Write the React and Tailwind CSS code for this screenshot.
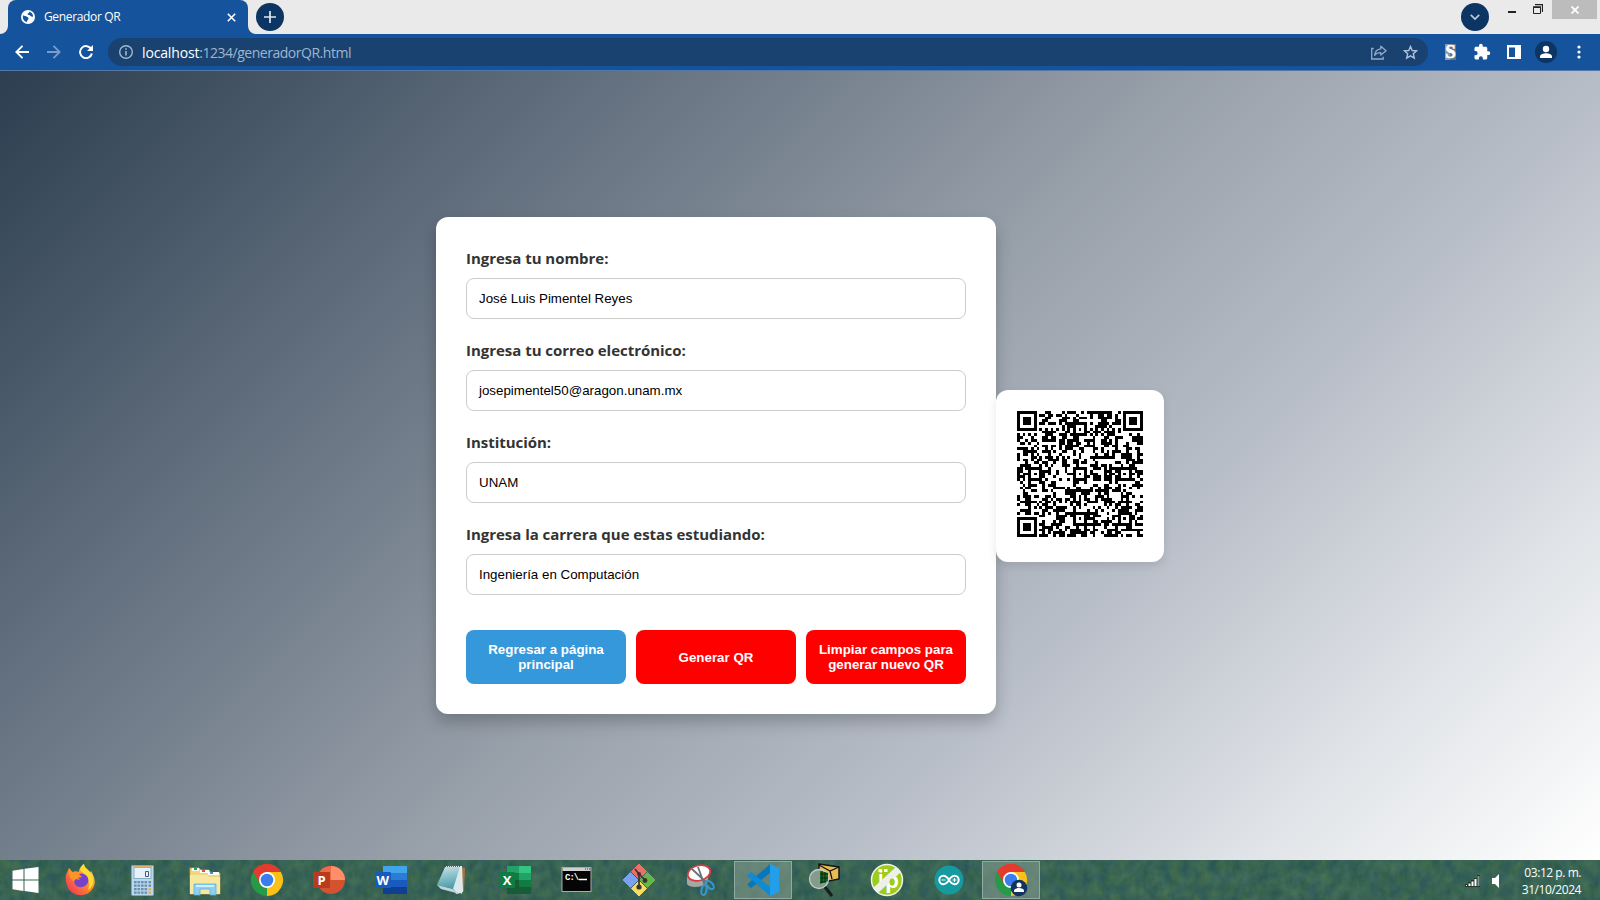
import React from "react";

/* ---------- QR encoder: version 7, level M, byte mode ---------- */
const SIZE = 45;

function encodeQr(text) {
  const exp = [];
  const log = [];
  for (let i = 0, x = 1; i < 255; i++) {
    exp[i] = x;
    log[x] = i;
    x <<= 1;
    if (x & 256) x ^= 0x11d;
  }
  const mul = (a, b) => (a && b ? exp[(log[a] + log[b]) % 255] : 0);

  const bytes = Array.from(new TextEncoder().encode(text)).slice(0, 122);
  const bits = [];
  const put = (v, n) => {
    for (let i = n - 1; i >= 0; i--) bits.push((v >> i) & 1);
  };
  put(4, 4);
  put(bytes.length, 8);
  bytes.forEach((b) => put(b, 8));
  put(0, 4);
  while (bits.length % 8) bits.push(0);
  const data = [];
  for (let i = 0; i < bits.length; i += 8) data.push(parseInt(bits.slice(i, i + 8).join(""), 2));
  for (let p = 0xec; data.length < 124; p ^= 0xfd) data.push(p);

  const gen = Array(18).fill(0);
  gen[17] = 1;
  for (let i = 0, root = 1; i < 18; i++) {
    for (let j = 0; j < 18; j++) {
      gen[j] = mul(gen[j], root);
      if (j < 17) gen[j] ^= gen[j + 1];
    }
    root = mul(root, 2);
  }
  const blocks = [0, 1, 2, 3].map((k) => data.slice(k * 31, k * 31 + 31));
  const ecc = blocks.map((block) => {
    const r = Array(18).fill(0);
    block.forEach((b) => {
      const f = b ^ r.shift();
      r.push(0);
      gen.forEach((g, i) => (r[i] ^= mul(g, f)));
    });
    return r;
  });
  const words = [];
  for (let i = 0; i < 31; i++) blocks.forEach((b) => words.push(b[i]));
  for (let i = 0; i < 18; i++) ecc.forEach((b) => words.push(b[i]));

  const m = Array.from({ length: SIZE }, () => Array(SIZE).fill(null));
  for (let i = 0; i < SIZE; i++) {
    m[6][i] = i % 2 === 0;
    m[i][6] = i % 2 === 0;
  }
  [[3, 3], [41, 3], [3, 41]].forEach(([cx, cy]) => {
    for (let dy = -4; dy <= 4; dy++)
      for (let dx = -4; dx <= 4; dx++) {
        const d = Math.max(Math.abs(dx), Math.abs(dy));
        if (m[cy + dy] && m[cy + dy][cx + dx] !== undefined) m[cy + dy][cx + dx] = d !== 2 && d !== 4;
      }
  });
  [[6, 22], [22, 6], [22, 22], [22, 38], [38, 22], [38, 38]].forEach(([cx, cy]) => {
    for (let dy = -2; dy <= 2; dy++)
      for (let dx = -2; dx <= 2; dx++) m[cy + dy][cx + dx] = Math.max(Math.abs(dx), Math.abs(dy)) !== 1;
  });
  for (let i = 0; i < 18; i++) {
    const v = ((0x07c94 >> i) & 1) === 1;
    m[Math.floor(i / 3)][34 + (i % 3)] = v;
    m[34 + (i % 3)][Math.floor(i / 3)] = v;
  }
  const fmt = 0x5412;
  const f = (i) => ((fmt >> i) & 1) === 1;
  for (let i = 0; i < 6; i++) m[i][8] = f(i);
  m[7][8] = f(6);
  m[8][8] = f(7);
  m[8][7] = f(8);
  for (let i = 9; i < 15; i++) m[8][14 - i] = f(i);
  for (let i = 0; i < 8; i++) m[8][SIZE - 1 - i] = f(i);
  for (let i = 8; i < 15; i++) m[SIZE - 15 + i][8] = f(i);
  m[SIZE - 8][8] = true;

  let k = 0;
  for (let right = SIZE - 1; right >= 1; right -= 2) {
    if (right === 6) right = 5;
    for (let v = 0; v < SIZE; v++)
      for (let j = 0; j < 2; j++) {
        const x = right - j;
        const y = ((right + 1) & 2) === 0 ? SIZE - 1 - v : v;
        if (m[y][x] === null) {
          const bit = k < words.length * 8 ? (words[k >> 3] >> (7 - (k & 7))) & 1 : 0;
          k++;
          m[y][x] = (bit ^ ((x + y) % 2 === 0 ? 1 : 0)) === 1;
        }
      }
  }
  return m;
}

function QrCode({ text }) {
  const d = encodeQr(text)
    .map((row, y) => row.map((on, x) => (on ? `M${x} ${y}h1v1h-1z` : "")).join(""))
    .join("");
  return (
    <svg className="block size-[126px]" viewBox="0 0 45 45" shapeRendering="crispEdges">
      <path d={d} fill="#000" />
    </svg>
  );
}

/* ---------- Browser chrome ---------- */
function TabStrip() {
  return (
    <div className="flex h-[34px] bg-[#eaeaea]">
      <div className="flex w-2 items-end bg-[#15539c]">
        <div className="h-full w-2 rounded-br-lg bg-[#eaeaea]" />
      </div>
      <div className="flex w-60 bg-[#eaeaea]">
        <div className="flex w-full items-center rounded-t-lg bg-[#15539c] pl-[13px] pr-[11px]">
          <svg className="size-[14px]" viewBox="0 0 14 14">
            <circle cx="7" cy="7" r="7" fill="#fff" />
            <path d="M2 5.2c1.500 1 2.800.4 3.600 1.400.8 1 2 .6 1.900 1.900-.1 1-1.200 1.100-1.500 3.400C3 11.600 1.300 8.600 2 5.200zM8.600 1.800c-.2 1.600-1.800 1.100-2 2.300.2 1.300 2.100.7 2.900 1.700.8 1.100 1.700 1.200 2.600.8-.1-2.500-1.500-4.200-3.500-4.800z" fill="#15539c" />
          </svg>
          <span className="ml-[9px] flex-1 whitespace-nowrap font-['Open_Sans','Noto_Sans',sans-serif] text-[12px] tracking-[-0.35px] text-white">Generador QR</span>
          <svg className="mr-px size-[9px]" viewBox="0 0 9 9" stroke="#fff" strokeWidth="1.6">
            <path d="M.8.8l7.400 7.400M8.200.8L.8 8.200" />
          </svg>
        </div>
      </div>
      <div className="w-2 bg-[#15539c]">
        <div className="h-full w-2 rounded-bl-lg bg-[#eaeaea]" />
      </div>
      <div className="mt-[3px] flex size-7 items-center justify-center rounded-full bg-[#0d3563]">
        <svg className="size-3" viewBox="0 0 12 12" stroke="#dfe8f3" strokeWidth="1.700">
          <path d="M6 0v12M0 6h12" />
        </svg>
      </div>
      <div className="flex-1" />
      <div className="mt-[3px] flex size-7 items-center justify-center rounded-full bg-[#0d3563]">
        <svg className="size-[10px]" viewBox="0 0 10 10" fill="none" stroke="#b9cbe2" strokeWidth="1.700">
          <path d="M.8 2.800L5 7l4.200-4.200" />
        </svg>
      </div>
      <svg className="ml-[19px] mt-[11px] h-[2px] w-2" viewBox="0 0 8 2"><path d="M0 0h8v2H0z" fill="#222" /></svg>
      <svg className="ml-[17px] mt-1 size-[10px]" viewBox="0 0 10 10" fill="none" stroke="#222">
        <path d="M.5 3.500h7v6h-7z" /><path d="M0 3h8M2 .5h7.500V8" strokeWidth="1.300" />
      </svg>
      <div className="ml-[9px] mr-[3px] flex h-[19px] w-[45px] items-center justify-center bg-[#bcbcbc]">
        <svg className="size-2" viewBox="0 0 8 8" stroke="#fff" strokeWidth="1.700"><path d="M.5.5l7 7M7.500.5l-7 7" /></svg>
      </div>
    </div>
  );
}

function Toolbar() {
  return (
    <div className="flex h-[37px] items-center border-b border-[#5279a4] bg-[#15539c]">
      <svg className="ml-[15px] size-[14px]" viewBox="0 0 14 14" fill="none" stroke="#fff" strokeWidth="1.900"><path d="M14 7H1.500M7.500.8L1.300 7l6.200 6.200" /></svg>
      <svg className="ml-[18px] size-[14px]" viewBox="0 0 14 14" fill="none" stroke="#799dc8" strokeWidth="1.800"><path d="M0 7h12.500M6.500.8L12.700 7l-6.200 6.200" /></svg>
      <svg className="ml-[18px] size-[14px]" viewBox="0 0 14 14" fill="none"><path d="M12.300 4.200A6 6 0 1 0 12.900 8.500" stroke="#fff" strokeWidth="2" /><path d="M14 0v6H8z" fill="#fff" /></svg>
      <div className="ml-[15px] flex h-7 w-[1320px] items-center rounded-full bg-[#194271] pl-[11px] pr-[10px]">
        <svg className="size-[14px]" viewBox="0 0 14 14" fill="none" stroke="#a3b7cf" strokeWidth="1.400"><circle cx="7" cy="7" r="6.300" /><path d="M7 6v4.500M7 3.300v1.500" strokeWidth="1.600" /></svg>
        <span className="ml-[9px] flex-1 pt-px font-['Open_Sans','Noto_Sans',sans-serif] text-[14px] leading-5 tracking-[-0.48px] text-[#9fb5cf]">
          <span className="tracking-[-0.15px] text-white">localhost</span>:1234/generadorQR.html
        </span>
        <svg className="h-[15px] w-4" viewBox="0 0 16 15" fill="none" stroke="#93abc8" strokeWidth="1.300"><path d="M2.700 3.500H.7v10.500h11.500v-2.300" /><path d="M9.800 1.200l5.300 4.500-5.300 4.400V7.600C7 7.500 5 8.400 3.600 10.300 4 6.800 6 4.300 9.800 3.900z" strokeLinejoin="round" /></svg>
        <svg className="ml-4 size-[15px]" viewBox="0 0 15 15" fill="none" stroke="#b0c3da" strokeWidth="1.400"><path d="M7.500 1.500l1.700 4 4.400.4-3.300 2.900 1 4.300-3.800-2.300-3.800 2.300 1-4.300L1.400 5.900l4.400-.4z" /></svg>
      </div>
      <div className="ml-[17px] flex h-[16px] w-[11px] items-center justify-center bg-[linear-gradient(90deg,#8b98a5_50%,#657487_50%)]">
        <span className="font-['Liberation_Serif',serif] text-[19px] font-bold leading-[16px] text-white [-webkit-text-stroke:0.6px_#fff]">S</span>
      </div>
      <svg className="ml-[17px] size-[18px]" viewBox="0 0 24 24" fill="#fff"><path d="M20.500 11H19V7c0-1.100-.9-2-2-2h-4V3.500a2.500 2.500 0 0 0-5 0V5H4c-1.100 0-2 .9-2 2v3.800h1.500a2.700 2.700 0 0 1 0 5.400H2V20c0 1.100.9 2 2 2h3.800v-1.500a2.700 2.700 0 0 1 5.400 0V22H17c1.100 0 2-.9 2-2v-4h1.500a2.500 2.500 0 0 0 0-5z" /></svg>
      <svg className="ml-4 h-[14px] w-[14px]" viewBox="0 0 14 14"><path d="M0 0h14v14H0zM2 2.500v9.500h6V2.500z" fill="#fff" fillRule="evenodd" /></svg>
      <svg className="ml-[14px] size-[22px]" viewBox="0 0 22 22"><circle cx="11" cy="11" r="11" fill="#0d3563" /><circle cx="11" cy="8" r="3.200" fill="#fff" /><path d="M5 17v-1.600c0-2.200 3.600-3.200 6-3.200s6 1 6 3.200V17z" fill="#fff" /></svg>
      <svg className="ml-5 h-[14px] w-1" viewBox="0 0 4 14" fill="#fff"><circle cx="2" cy="2" r="1.600" /><circle cx="2" cy="7" r="1.600" /><circle cx="2" cy="12" r="1.600" /></svg>
    </div>
  );
}

/* ---------- Page ---------- */
const fields = [
  { label: "Ingresa tu nombre:", value: "José Luis Pimentel Reyes" },
  { label: "Ingresa tu correo electrónico:", value: "josepimentel50@aragon.unam.mx" },
  { label: "Institución:", value: "UNAM" },
  { label: "Ingresa la carrera que estas estudiando:", value: "Ingeniería en Computación" },
];

function FormCard() {
  return (
    <div className="h-[497px] w-[560px] rounded-xl bg-white p-[30px] shadow-[0_8px_16px_rgba(0,0,0,0.22)]">
      {fields.map((f) => (
        <div key={f.label} className="mb-5">
          <div className="mb-2 h-[23px] whitespace-nowrap font-['Open_Sans','Noto_Sans',sans-serif] text-[15px] font-bold leading-[23px] tracking-[-0.03px] text-[#333]">{f.label}</div>
          <div className="flex h-[41px] items-center rounded-lg border border-[#ccc] px-3 font-['Liberation_Sans',sans-serif] text-[13.333px] text-black">{f.value}</div>
        </div>
      ))}
      <div className="mt-[35px] grid h-[54px] grid-cols-3 gap-[10px] text-center font-['Liberation_Sans',sans-serif] text-[13.333px] font-bold leading-[15px] text-white">
        <button className="rounded-lg bg-[#3498db]">Regresar a página<br />principal</button>
        <button className="rounded-lg bg-[#ff0000]">Generar QR</button>
        <button className="whitespace-nowrap rounded-lg bg-[#ff0000]">Limpiar campos para<br />generar nuevo QR</button>
      </div>
    </div>
  );
}

/* ---------- Taskbar icons, drawn on a 34 unit square ---------- */
function Chrome({ badge }) {
  return (
    <>
      <path d="M17 17L3.140 9A16 16 0 0 1 30.860 9z" fill="#e33b2e" />
      <path d="M17 17L30.860 9A16 16 0 0 1 17 33z" fill="#fbc116" />
      <path d="M17 17v16A16 16 0 0 1 3.140 9z" fill="#259b45" />
      <path d="M17 9h13.860l-5 11L17 33l5-13z" fill="#fbc116" />
      <path d="M3.140 9H17v8l-7 4z" fill="#259b45" />
      <path d="M3.140 9l7 11.500L17 9h13.860A16 16 0 0 0 3.140 9z" fill="#e33b2e" />
      <circle cx="17" cy="17" r="8" fill="#fff" />
      <circle cx="17" cy="17" r="6.300" fill="#3b7ded" />
      {badge && (
        <>
          <circle cx="25" cy="25" r="8.300" fill="#12325f" />
          <circle cx="25" cy="22" r="2.500" fill="#fff" />
          <path d="M20 29v-1.200c0-3.600 10-3.600 10 0V29z" fill="#fff" />
        </>
      )}
    </>
  );
}

const letter = "font-['Open_Sans',sans-serif] text-[13px] font-bold";

const icons = [
  {
    id: "firefox",
    art: (
      <>
        <path d="M2 12c1-3 2-4 3-7l3 4c3-1 5-1 7 0 0-4 3-7 5-8 0 4 4 5 6 9l1-2c4 6 5 12 2 17-6 10-20 9-25 0C2 20 1 16 2 12z" fill="url(#fox)" />
        <path d="M16 7c1-3 2-4 4-6 0 5 8 6 9 15 1 5-2 9-5 11 3-8 0-13-8-20z" fill="#ffdb35" />
        <path d="M13 13c2-4 9-3 11 2 2 6-4 10-9 9-4-1-6-5-4-8l5 1z" fill="#7542c9" />
        <path d="M5 5l4 5c3-1 5 0 6 1l3 3-5 1c-1 2-3 1-3 4-3-3-7-7-5-14z" fill="#ff9429" />
      </>
    ),
  },
  {
    id: "calc",
    art: (
      <>
        <rect x="5.500" y="2.500" width="22" height="30" rx="1" fill="#b9d8ef" stroke="#6fa5cf" />
        <rect x="8" y="4.500" width="17" height="11" fill="#e5f2fb" stroke="#8cabc5" />
        <path d="M7 4h19" stroke="#eba64d" strokeWidth="1.500" />
        <path d="M19.500 8.500h3v5h-3z" fill="none" stroke="#445f78" />
        {[18, 21.500, 25, 28.500].map((y) => [8, 11.500, 15, 18.500, 22.500].map((x) => <rect key={x + "-" + y} x={x} y={y} width="2.600" height="2.300" fill={x > 20 && y > 24 ? "#e8ab57" : "#6c91ad"} />))}
      </>
    ),
  },
  {
    id: "folder",
    art: (
      <>
        <path d="M2 5h9l2 2h8l2 3h9v21H2z" fill="#eed77c" stroke="#c7a654" strokeWidth=".7" />
        <path d="M4 5h7v3H4zM12 7h9v3h-9zM20 9h11v3H20z" fill="#fffdf0" />
        <path d="M6 5h3v2H6z" fill="#21a54c" /><path d="M14 7h3v2h-3z" fill="#dd5047" /><path d="M22 9h3v2h-3z" fill="#3c94d7" />
        <path d="M2 12h17l2 2h11v17H2z" fill="#f7e8a1" />
        <path d="M6 32V21h22v11h-6v-6H12v6z" fill="#8dcff0" stroke="#5db0dc" strokeWidth=".8" /><path d="M8 22h18v2H8z" fill="#d1effb" />
      </>
    ),
  },
  { id: "chrome", art: <Chrome /> },
  {
    id: "powerpoint",
    art: (
      <>
        <circle cx="19" cy="17" r="14" fill="#d35230" /><path d="M19 3a14 14 0 0 1 14 14H19z" fill="#ff8f6b" /><path d="M19 3a14 14 0 0 0-14 14h14z" fill="#ed6c47" />
        <rect x="1" y="9" width="17" height="16" rx="1" fill="#b83b1d" /><text x="5.500" y="21.500" fill="#fff" className={letter}>P</text>
      </>
    ),
  },
  {
    id: "word",
    art: (
      <>
        <path d="M9 3h24v7H9z" fill="#41a5ee" /><path d="M9 10h24v7H9z" fill="#2b7cd3" /><path d="M9 17h24v7H9z" fill="#185abd" /><path d="M9 24h24v7H9z" fill="#103f91" />
        <rect x="1" y="9" width="16" height="16" rx="1" fill="#185abd" /><text x="2.500" y="21.500" fill="#fff" className={letter}>W</text>
      </>
    ),
  },
  {
    id: "notepad",
    art: (
      <>
        <path d="M25 4l4 1-1 23-4 2z" fill="#a77846" /><path d="M10 3h16l1 26-7 2z" fill="#e5edee" /><path d="M9 4h15l-6 22L1 22z" fill="url(#note)" />
        <path d="M24 4l2 27-9-5z" fill="#d9e8ec" /><path d="M1 22l16 4 7 5-19-5z" fill="#bdd4d9" /><path d="M11 3h13" stroke="#506267" strokeWidth="2" strokeDasharray="1 1" />
      </>
    ),
  },
  {
    id: "excel",
    art: (
      <>
        <path d="M9 3h12v7H9z" fill="#21a366" /><path d="M21 3h12v7H21z" fill="#33c481" /><path d="M9 10h12v7H9z" fill="#107c41" /><path d="M21 10h12v7H21z" fill="#21a366" /><path d="M9 17h24v14H9z" fill="#185c37" /><path d="M21 17h12v7H21z" fill="#107c41" />
        <rect x="1" y="9" width="16" height="16" rx="1" fill="#107c41" /><text x="4.800" y="21.500" fill="#fff" className={letter}>X</text>
      </>
    ),
  },
  {
    id: "terminal",
    art: (
      <>
        <rect x="2" y="4.500" width="29" height="24" fill="#050505" stroke="#aaa" /><path d="M2.500 5h28v3h-28z" fill="#d0d0d0" /><path d="M25 6h1M27 6h1M29 6h1" stroke="#333" />
        <text x="5" y="16.500" fill="#fff" className="font-['Liberation_Mono',monospace] text-[9px] font-bold tracking-[-1px]">C:\</text><path d="M19 16.500h8" stroke="#fff" strokeWidth="1.500" />
      </>
    ),
  },
  {
    id: "git",
    art: (
      <>
        <path d="M17 1l7.500 7.500L17 16 9.500 8.500z" fill="#ee6e69" stroke="#ee6e69" /><path d="M25.500 9.500L33 17l-7.500 7.500L18 17z" fill="#68b64b" stroke="#68b64b" /><path d="M8.500 9.500L16 17l-7.500 7.500L1 17z" fill="#7ba2ee" stroke="#7ba2ee" /><path d="M17 18l7.500 7.500L17 33l-7.500-7.500z" fill="#f6db65" stroke="#f6db65" />
        <path d="M13 6l4 5v13M17 11l6 6" stroke="#38362f" strokeWidth="1.700" fill="none" /><circle cx="17" cy="11" r="2" fill="#38362f" /><circle cx="17" cy="24" r="2.600" fill="#38362f" /><circle cx="23" cy="17.500" r="2.400" fill="#38362f" />
      </>
    ),
  },
  {
    id: "snip",
    art: (
      <>
        <path d="M3 14v7c2 4 15 4 20-1l2-9z" fill="#a4a7a4" /><ellipse cx="15" cy="10" rx="11.500" ry="7.500" transform="rotate(-15 15 10)" fill="#fff" stroke="#d43d3f" strokeWidth="1.800" />
        <path d="M8 6l15 14M14 4l7 19" stroke="#687278" strokeWidth="1.800" /><ellipse cx="26" cy="22" rx="2.700" ry="5" transform="rotate(-40 26 22)" fill="none" stroke="#3598cf" strokeWidth="2" /><ellipse cx="20" cy="27" rx="2.500" ry="5" transform="rotate(12 20 27)" fill="none" stroke="#3598cf" strokeWidth="2" />
      </>
    ),
  },
  {
    id: "vscode",
    active: true,
    art: (
      <>
        <path d="M24 1v9L5 25l-4-3.500z" fill="#0876bd" /><path d="M24 33v-9L5 9l-4 3.500z" fill="#0f8ad5" /><path d="M24 1l9 4v24l-9 4z" fill="#239fea" />
      </>
    ),
  },
  {
    id: "mail-search",
    art: (
      <>
        <path d="M11 1l20 3v12l-10 2-10-5z" fill="#e8bd57" stroke="#171712" strokeWidth="1.500" /><path d="M11 2l11 6 9-4M22 8l2 8" stroke="#171712" fill="none" strokeWidth="1.300" />
        <circle cx="11" cy="16" r="9.500" fill="#859b8e" stroke="#c2cbc5" strokeWidth="1.300" /><path d="M12 8l8 2v8l-8 3z" fill="#146c27" /><path d="M12 11h8M12 15h8M12 19h6M14 8v12M17 9v10" stroke="#08290e" /><path d="M17 24l7 9" stroke="#181e1a" strokeWidth="3" />
      </>
    ),
  },
  {
    id: "jdp",
    art: (
      <>
        <circle cx="17" cy="17" r="15.500" fill="#9dcc1c" stroke="#f0f3eb" strokeWidth="1.500" /><text x="8" y="21" fill="#fff" className="font-['Open_Sans',sans-serif] text-[18px] font-bold">j</text><text x="15" y="25" fill="#fff" className="font-['Open_Sans',sans-serif] text-[22px] font-bold">p</text>
        <path d="M3 25L26 4l5 5L8 30z" fill="#edf0e9" />
        <path d="M14 6h3.500v3H14zM8.500 6H12v3H8.500z" fill="#fff" /><ellipse cx="22" cy="19" rx="2.500" ry="3.500" fill="#9dcc1c" />
      </>
    ),
  },
  {
    id: "arduino",
    art: (
      <>
        <circle cx="17" cy="17" r="14.500" fill="#159aa0" /><path d="M17 17c-2-3-3.500-4.200-5.500-4.200a4.200 4.200 0 0 0 0 8.400c2 0 3.500-1.200 5.500-4.200s3.500-4.200 5.500-4.200a4.200 4.200 0 0 1 0 8.400c-2 0-3.500-1.200-5.500-4.200z" fill="none" stroke="#fff" strokeWidth="2" /><path d="M9.500 17h4M20.500 17h4M22.500 15v4" stroke="#fff" strokeWidth="1.200" />
      </>
    ),
  },
  { id: "chrome-profile", active: true, art: <Chrome badge /> },
];

function Taskbar() {
  return (
    <div className="relative isolate flex h-10 items-center bg-[#3d6858]">
      <svg className="absolute inset-0 -z-10 h-10 w-[1600px]">
        <defs>
          <filter id="grass" x="0" y="0" width="100%" height="100%" colorInterpolationFilters="sRGB">
            <feTurbulence type="fractalNoise" baseFrequency=".1 .08" numOctaves="3" seed="8" />
            <feColorMatrix values=".16 0 0 0 .14  .14 0 0 0 .32  0 0 .12 0 .27  0 0 0 0 1" />
          </filter>
          <linearGradient id="fox" x1="1" y1="0" x2="0" y2="1"><stop stopColor="#ffe23b" /><stop offset=".5" stopColor="#ff852e" /><stop offset="1" stopColor="#e92666" /></linearGradient>
          <linearGradient id="note" x1="0" y1="0" x2=".2" y2="1"><stop stopColor="#c9e2e6" /><stop offset="1" stopColor="#4b9fab" /></linearGradient>
        </defs>
        <rect width="1600" height="40" fill="#3d6858" filter="url(#grass)" />
      </svg>
      <div className="flex w-[50px] justify-center">
        <svg className="h-[26px] w-[27px]" viewBox="0 0 27 26" fill="#fff"><path d="M.5 3.700L11.500 2v10.400H.5zM12.500 1.800L26.500 0v12.400h-14zM.5 13.400h11V24L.5 22.300zM12.500 13.400h14V26l-14-1.900z" /></svg>
      </div>
      {icons.map((icon) => (
        <div key={icon.id} className="flex w-[62px] justify-center">
          <div className={icon.active ? "flex h-[38px] w-[58px] items-center justify-center border border-[#91aaa1] bg-[#84998f]/60" : "flex h-[38px] w-[58px] items-center justify-center"}>
            <svg className="size-[34px]" viewBox="0 0 34 34">{icon.art}</svg>
          </div>
        </div>
      ))}
      <div className="flex-1" />
      <svg className="mt-[2px] h-3 w-[15px]" viewBox="0 0 15 12">
        <path d="M0 9h3V7h3V5h3V3h3V0h3v12H0z" fill="#22382f" />
        <path d="M1 10h1v1H1zM3.500 8.500H5.500V11h-2zM6.500 6.500h2V11h-2zM9.500 4h2v7h-2z" fill="#fff" /><path d="M12.500 1h2v10h-2z" fill="#84958d" />
      </svg>
      <svg className="ml-[12px] mt-[2px] h-[14px] w-2" viewBox="0 0 8 14"><path d="M0 4h3l4-4v14l-4-4H0z" fill="#fff" /></svg>
      <div className="ml-[21px] mr-[19px] w-[60px] whitespace-nowrap pt-[2px] text-right font-['Open_Sans','Noto_Sans',sans-serif] text-[12px] leading-[17px] tracking-[-0.45px] text-white">
        <div>03:12 p. m.</div>
        <div>31/10/2024</div>
      </div>
    </div>
  );
}

export default function App() {
  return (
    <div className="flex h-[900px] w-[1600px] flex-col overflow-hidden">
      <TabStrip />
      <Toolbar />
      <main className="flex flex-1 items-center justify-center bg-[linear-gradient(135deg,#2c3e50_0%,#77828f_35%,#98a0aa_50%,#b8bec8_68%,#e0e3e7_85%,#ffffff_100%)]">
        <FormCard />
        <div className="mt-[21px] h-[172px] w-[168px] rounded-xl bg-white p-[21px] shadow-[0_4px_8px_rgba(0,0,0,0.1)]">
          <QrCode text={fields.map((f) => f.value).join("\n")} />
        </div>
      </main>
      <Taskbar />
    </div>
  );
}
